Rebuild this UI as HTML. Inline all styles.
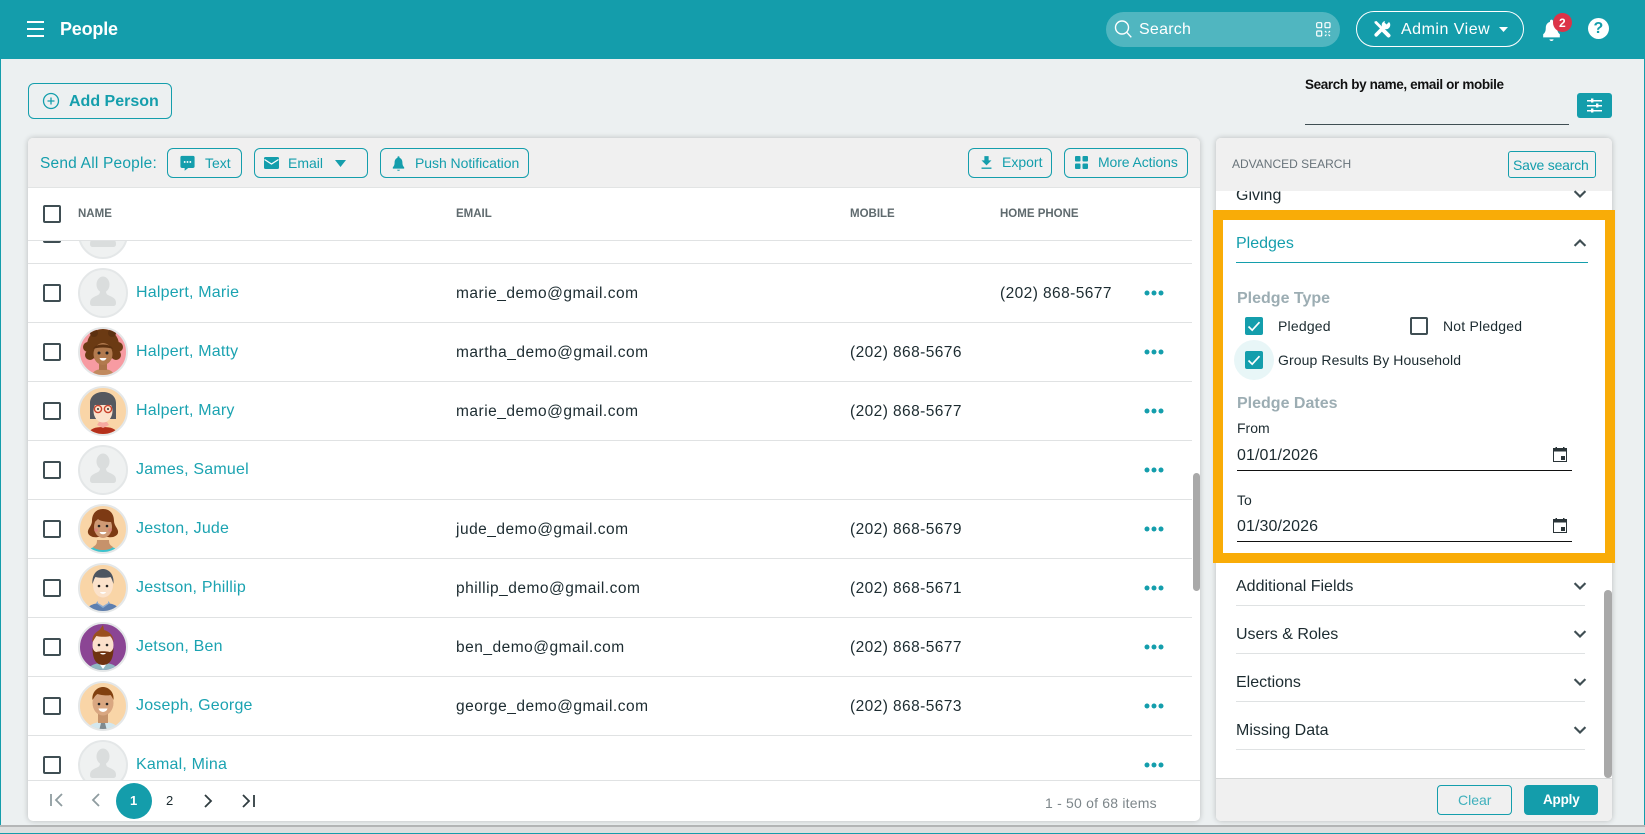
<!DOCTYPE html>
<html><head><meta charset="utf-8"><title>People</title>
<style>
html,body{margin:0;padding:0}
html{overflow:hidden;height:834px}
body{width:1645px;height:834px;overflow:hidden;position:relative;background:#ecf0f1;font-family:"Liberation Sans",Arial,sans-serif;color:#1c2b30}
div,svg{position:absolute}
.t{position:absolute;white-space:nowrap;height:0;line-height:0}
.b{position:absolute;box-sizing:border-box;border:1px solid #149eac;border-radius:6px}
.tl{color:#149eac}
.cb{position:absolute;left:43px;width:18px;height:18px;box-sizing:border-box;border:2px solid #3f4e53;border-radius:2px}
.ck{position:absolute;width:18px;height:18px;border-radius:2px;background:#149eac}
.ln{position:absolute;left:28px;width:1164px;height:1px;background:#e0e2e3}
.n{left:136px;font-size:16px;letter-spacing:.2px;color:#1ba3b1;margin-top:2px}
.e{left:456px;font-size:15.5px;letter-spacing:.5px;color:#1c2b30;margin-top:2px}
.m{left:850px;font-size:15.5px;letter-spacing:.42px;color:#1c2b30;margin-top:2px}
.h{left:1000px;font-size:15.5px;letter-spacing:.42px;color:#1c2b30;margin-top:2px}
.th{font-size:11.5px;font-weight:bold;color:#5f6a6e;top:214px}
.d{position:absolute;left:1144px;width:20px;height:6px}
.s{position:absolute;left:1236px;font-size:16px;color:#1c2b30;margin-top:2px}
.sl{position:absolute;left:1236px;width:349px;height:1px;background:#dfe2e3}
.lb{position:absolute;left:1237px;font-size:16px;font-weight:bold;color:#9cadb3}
.av{position:absolute;left:78px;width:50px;height:50px}
</style></head>
<body>
<svg width="0" height="0" style="position:absolute;left:0;top:0">
<defs>
<symbol id="ph" viewBox="0 0 50 50"><circle cx="25" cy="25" r="24" fill="#eff1f1" stroke="#e4e7e8" stroke-width="2"/><ellipse cx="25" cy="16.500" rx="6.500" ry="8" fill="#dadddd"/><path d="M12 35c0-5 4-6 8-8 2-1 2-3 2-5h6c0 2 0 4 2 5 4 2 8 3 8 8 0 2-1 3-3 3H15c-2 0-3-1-3-3z" fill="#dadddd"/></symbol>
<symbol id="dn" viewBox="0 0 24 24"><path d="M5.500 8.500L12 15l6.500-6.500" fill="none" stroke="#3f4e53" stroke-width="2.600"/></symbol>
<symbol id="cal" viewBox="0 0 14 15"><rect x=".5" y="1.500" width="13" height="13" fill="none" stroke="#2a3438"/><rect x="0" y="1" width="14" height="3.500" fill="#2a3438"/><rect x="2.500" y="0" width="1.500" height="2.500" fill="#2a3438"/><rect x="10" y="0" width="1.500" height="2.500" fill="#2a3438"/><rect x="8" y="9" width="4" height="4" fill="#2a3438"/></symbol>
<symbol id="dots" viewBox="0 0 20 6"><circle cx="3" cy="3" r="2.500" fill="#149eac"/><circle cx="10" cy="3" r="2.500" fill="#149eac"/><circle cx="17" cy="3" r="2.500" fill="#149eac"/></symbol>
<symbol id="tick" viewBox="0 0 18 18"><path d="M3.500 9.500l3.700 3.700 7.300-8" fill="none" stroke="#fff" stroke-width="1.700"/></symbol>
</defs>
</svg>

<!-- page frame -->
<div style="left:0;top:0;width:1px;height:834px;background:#149dab"></div>
<div style="left:1644px;top:0;width:1px;height:834px;background:#149dab"></div>
<div style="left:0;top:825px;width:1645px;height:2px;background:#b4b6b7"></div>
<div style="left:0;top:827px;width:1645px;height:6px;background:#dddfdf"></div>
<div style="left:0;top:833px;width:1645px;height:1px;background:#149dab"></div>

<!-- top bar -->
<div style="left:0;top:0;width:1645px;height:59px;background:#149dab"></div>
<div style="left:27px;top:21px;width:17px;height:2px;background:#fff"></div>
<div style="left:27px;top:28px;width:17px;height:2px;background:#fff"></div>
<div style="left:27px;top:35px;width:17px;height:2px;background:#fff"></div>
<div class="t" style="left:60px;top:29px;font-size:18px;font-weight:bold;color:#fff;letter-spacing:-.2px">People</div>

<div style="left:1106px;top:12px;width:234px;height:35px;border-radius:18px;background:#50b6c0"></div>
<svg style="left:1114px;top:19px" width="19" height="20" viewBox="0 0 19 20"><circle cx="8" cy="8.500" r="6.500" fill="none" stroke="#fff" stroke-width="1.400"/><path d="M12.800 13.300l4.500 5" stroke="#fff" stroke-width="1.400"/></svg>
<div class="t" style="left:1139px;top:29.500px;font-size:16px;color:#fff;letter-spacing:.25px">Search</div>
<svg style="left:1316px;top:22px" width="15" height="15" viewBox="0 0 15 15" fill="none" stroke="#fff" stroke-width="1.200"><rect x=".7" y=".7" width="5" height="5" rx="1"/><rect x="9" y=".7" width="5" height="5" rx="1"/><rect x=".7" y="9" width="5" height="5" rx="1"/><path d="M9 9l1.500 1.500M14 9l-1.500 1.500M9 14l1.500-1.500M14 14l-1.500-1.500"/></svg>

<div style="left:1356px;top:11px;width:168px;height:36px;box-sizing:border-box;border:1px solid #fff;border-radius:18px"></div>
<svg style="left:1373px;top:20px" width="18" height="18" viewBox="0 0 18 18">
<path d="M1.500 1.500l2-.5 6 6-2 2-6-6z" fill="#fff"/><path d="M10 10l5.500 5.500" stroke="#fff" stroke-width="4" stroke-linecap="round"/>
<path d="M3.200 14.800L11 7" stroke="#fff" stroke-width="3.600" stroke-linecap="round"/>
<circle cx="13" cy="5" r="4.300" fill="#fff"/><path d="M13.500 4.500L17.500 .5H12l-.5 2z" fill="#149dab"/>
</svg>
<div class="t" style="left:1401px;top:29.500px;font-size:16px;color:#fff;letter-spacing:.5px">Admin View</div>
<svg style="left:1499px;top:27px" width="9" height="5" viewBox="0 0 9 5"><path d="M0 0h9L4.500 5z" fill="#fff"/></svg>

<svg style="left:1539px;top:17px" width="25" height="25" viewBox="0 0 24 24"><path d="M12 23c1.100 0 2-.5 2-1.500h-4c0 1 .9 1.500 2 1.500zm8-6.500c-2-1.500-2.500-3.500-2.500-6 0-3.070-1.630-5.140-4-5.820V4c0-.83-.67-1.500-1.500-1.500s-1.500.67-1.500 1.500v.68C8.140 5.360 6.500 7.420 6.500 10.500c0 2.500-.5 4.500-2.500 6v3h16v-3z" fill="#fff"/></svg>
<div style="left:1553px;top:13px;width:19px;height:19px;border-radius:50%;background:#dc3348"></div>
<div class="t" style="left:1559px;top:23px;font-size:12px;font-weight:bold;color:#fff">2</div>
<div style="left:1587.500px;top:17.500px;width:21px;height:21px;border-radius:50%;background:#fff"></div>
<div class="t" style="left:1593.500px;top:28.500px;font-size:16px;font-weight:bold;color:#149dab">?</div>

<!-- add person -->
<div class="b" style="left:28px;top:83px;width:144px;height:36px"></div>
<svg style="left:42px;top:92px" width="18" height="18" viewBox="0 0 18 18" fill="none" stroke="#149eac" stroke-width="1.300"><circle cx="9" cy="9" r="7.500"/><path d="M9 5.500v7M5.500 9h7"/></svg>
<div class="t tl" style="left:69px;top:101.500px;font-size:16px;font-weight:bold">Add Person</div>

<!-- search by name -->
<div class="t" style="left:1305px;top:84.500px;font-size:13.500px;font-weight:bold;color:#111;letter-spacing:-.37px">Search by name, email or mobile</div>
<div style="left:1305px;top:124px;width:264px;height:1px;background:#3f4e53"></div>
<div style="left:1577px;top:93px;width:35px;height:25px;border-radius:3px;background:#149dab"></div>
<svg style="left:1587px;top:98px" width="15" height="15" viewBox="0 0 15 15" fill="#fff"><rect x="0" y="2" width="15" height="1.500"/><rect x="0" y="7" width="15" height="1.500"/><rect x="0" y="12" width="15" height="1.500"/><rect x="4" y=".5" width="2.400" height="4"/><rect x="9" y="5.500" width="2.400" height="4"/><rect x="4" y="10.500" width="2.400" height="4"/></svg>

<!-- left card -->
<div style="left:28px;top:138px;width:1172px;height:683px;background:#fff;border-radius:5px;box-shadow:0 0 6px rgba(0,0,0,.22);overflow:hidden">
  <div style="left:0;top:0;width:1172px;height:49px;background:#f0f0f0;border-bottom:1px solid #e2e4e4"></div>
</div>
<div class="t tl" style="left:40px;top:164px;font-size:15.500px;letter-spacing:.2px">Send All People:</div>

<div class="b" style="left:167px;top:148px;width:75px;height:30px"></div>
<svg style="left:179px;top:154px" width="17" height="18" viewBox="0 0 24 24"><path d="M20 2H4c-1.100 0-2 .9-2 2v13c0 1.100.9 2 2 2h4v4l5-4h7c1.100 0 2-.9 2-2V4c0-1.100-.9-2-2-2z" fill="#149eac"/><circle cx="8" cy="10.500" r="1.300" fill="#fff"/><circle cx="12" cy="10.500" r="1.300" fill="#fff"/><circle cx="16" cy="10.500" r="1.300" fill="#fff"/></svg>
<div class="t tl" style="left:205px;top:163px;font-size:14px">Text</div>

<div class="b" style="left:254px;top:148px;width:114px;height:30px"></div>
<svg style="left:264px;top:157px" width="15" height="12" viewBox="0 0 15 12"><rect width="15" height="12" rx="1.500" fill="#149eac"/><path d="M.5 2.500l7 4.500 7-4.500" fill="none" stroke="#fff" stroke-width="1.200"/></svg>
<div class="t tl" style="left:288px;top:163px;font-size:14px">Email</div>
<svg style="left:335px;top:160px" width="11" height="7" viewBox="0 0 11 7"><path d="M0 0h11L5.500 7z" fill="#149eac"/></svg>

<div class="b" style="left:380px;top:148px;width:149px;height:30px"></div>
<svg style="left:390px;top:154px" width="17" height="18" viewBox="0 0 24 24"><path d="M12 23c1.100 0 2-.5 2-1.500h-4c0 1 .9 1.500 2 1.500zm8-5c-2-1.500-2.500-4-2.500-7 0-3.070-1.630-5.640-4-6.320V4c0-.83-.67-1.500-1.500-1.500s-1.500.67-1.500 1.500v.68C8.140 5.360 6.500 7.920 6.500 11c0 3-.5 5.500-2.500 7v2h16v-2z" fill="#149eac"/></svg>
<div class="t tl" style="left:415px;top:163px;font-size:14px;letter-spacing:-.05px">Push Notification</div>

<div class="b" style="left:968px;top:148px;width:84px;height:30px"></div>
<svg style="left:978px;top:154px" width="17" height="17" viewBox="0 0 24 24"><path d="M19 9h-4V3H9v6H5l7 7 7-7zM5 19v2h14v-2H5z" fill="#149eac"/></svg>
<div class="t tl" style="left:1002px;top:162px;font-size:14px">Export</div>

<div class="b" style="left:1064px;top:148px;width:124px;height:30px"></div>
<svg style="left:1075px;top:156px" width="13" height="13" viewBox="0 0 13 13" fill="#149eac"><rect width="5.500" height="5.500" rx="1"/><rect x="7.500" width="5.500" height="5.500" rx="1"/><rect y="7.500" width="5.500" height="5.500" rx="1"/><rect x="7.500" y="7.500" width="5.500" height="5.500" rx="1"/></svg>
<div class="t tl" style="left:1098px;top:162px;font-size:14px;letter-spacing:-.1px">More Actions</div>

<!-- table header -->
<div class="cb" style="top:205px"></div>
<div class="t th" style="left:78px">NAME</div>
<div class="t th" style="left:456px">EMAIL</div>
<div class="t th" style="left:850px">MOBILE</div>
<div class="t th" style="left:1000px">HOME PHONE</div>
<div class="ln" style="top:240px"></div>

<!-- table rows (clipped) -->
<div style="left:0;top:241px;width:1200px;height:539px;overflow:hidden">
  <div style="left:0;top:-241px;width:1200px;height:780px">
    <div class="cb" style="top:225px"></div>
    <svg class="av" style="top:209px"><use href="#ph"/></svg>
    <div class="ln" style="top:263px"></div>

    <div class="cb" style="top:284px"></div>
    <svg class="av" style="top:268px"><use href="#ph"/></svg>
    <div class="t n" style="top:291px">Halpert, Marie</div>
    <div class="t e" style="top:292px">marie_demo@gmail.com</div>
    <div class="t h" style="top:292px">(202) 868-5677</div>
    <svg class="d" style="top:290px"><use href="#dots"/></svg>
    <div class="ln" style="top:322px"></div>

    <div class="cb" style="top:343px"></div>
    <svg class="av" style="top:327px" viewBox="0 0 50 50"><circle cx="25" cy="25" r="24" fill="#f79ba2" stroke="#e4e7e8" stroke-width="2"/><clipPath id="c1"><circle cx="25" cy="25" r="23"/></clipPath><g clip-path="url(#c1)"><path d="M14 50c0-6 5-8 11-8s11 2 11 8z" fill="#c08a5f"/><circle cx="25" cy="18" r="16" fill="#6b3a13"/><circle cx="10" cy="20" r="5" fill="#6b3a13"/><circle cx="40" cy="20" r="5" fill="#6b3a13"/><circle cx="12" cy="28" r="5" fill="#6b3a13"/><circle cx="38" cy="28" r="5" fill="#6b3a13"/><circle cx="16" cy="6" r="4" fill="#5c3110"/><circle cx="34" cy="6" r="4" fill="#5c3110"/><path d="M21 36h8v7h-8z" fill="#ab7349"/><ellipse cx="25" cy="27" rx="9.500" ry="11" fill="#b27a4e"/><path d="M15 22c2-6 18-6 20 0-5-2-15-2-20 0z" fill="#5c3110"/><circle cx="21" cy="26" r="1.500" fill="#222"/><circle cx="29" cy="26" r="1.500" fill="#222"/><path d="M21.500 31h7c-1 3.500-6 3.500-7 0z" fill="#fff"/></g></svg>
    <div class="t n" style="top:350px">Halpert, Matty</div>
    <div class="t e" style="top:351px">martha_demo@gmail.com</div>
    <div class="t m" style="top:351px">(202) 868-5676</div>
    <svg class="d" style="top:349px"><use href="#dots"/></svg>
    <div class="ln" style="top:381px"></div>

    <div class="cb" style="top:402px"></div>
    <svg class="av" style="top:386px" viewBox="0 0 50 50"><circle cx="25" cy="25" r="24" fill="#f9d5a7" stroke="#e4e7e8" stroke-width="2"/><clipPath id="c2"><circle cx="25" cy="25" r="23"/></clipPath><g clip-path="url(#c2)"><path d="M10 50c1-7 6-9 15-9s14 2 15 9z" fill="#b5301b"/><path d="M19 39l6 3 6-3-2-3h-8z" fill="#f6a9a0"/><path d="M12 33V17c0-7 6-11 13-11s13 4 13 11v16h-6V20H18v13z" fill="#55585f"/><ellipse cx="25" cy="25" rx="9.500" ry="11.500" fill="#fbe2cb"/><path d="M15 19c0-9 20-9 20 0z" fill="#55585f"/><circle cx="20" cy="23" r="3.600" fill="none" stroke="#c8412c" stroke-width="1.400"/><circle cx="30" cy="23" r="3.600" fill="none" stroke="#c8412c" stroke-width="1.400"/><circle cx="20" cy="23" r="1" fill="#333"/><circle cx="30" cy="23" r="1" fill="#333"/></g></svg>
    <div class="t n" style="top:409px">Halpert, Mary</div>
    <div class="t e" style="top:410px">marie_demo@gmail.com</div>
    <div class="t m" style="top:410px">(202) 868-5677</div>
    <svg class="d" style="top:408px"><use href="#dots"/></svg>
    <div class="ln" style="top:440px"></div>

    <div class="cb" style="top:461px"></div>
    <svg class="av" style="top:445px"><use href="#ph"/></svg>
    <div class="t n" style="top:468px">James, Samuel</div>
    <svg class="d" style="top:467px"><use href="#dots"/></svg>
    <div class="ln" style="top:499px"></div>

    <div class="cb" style="top:520px"></div>
    <svg class="av" style="top:504px" viewBox="0 0 50 50"><circle cx="25" cy="25" r="24" fill="#f9d5a7" stroke="#e4e7e8" stroke-width="2"/><clipPath id="c3"><circle cx="25" cy="25" r="23"/></clipPath><g clip-path="url(#c3)"><path d="M9 50c1-6 7-8 16-8s15 2 16 8z" fill="#3cc3cf"/><path d="M15 43c3-2 4-3 4-7h12c0 4 1 5 4 7-4 4-16 4-20 0z" fill="#c6926b"/><path d="M25 5c-8 0-11 6-11 12 0 5-5 8-4 12 1 3 5 5 10 4h10c5 1 9-1 10-4 1-4-4-7-4-12 0-6-3-12-11-12z" fill="#7d3a14"/><ellipse cx="25" cy="23" rx="9" ry="11" fill="#cf9a75"/><path d="M16 18c2-6 8-8 12-7 4 1 6 4 6 7-6 0-12-1-14-3-1 1-2 2-4 3z" fill="#7d3a14"/><circle cx="21" cy="22" r="1.300" fill="#222"/><circle cx="29" cy="22" r="1.300" fill="#222"/><circle cx="18" cy="26" r="1.800" fill="#d8847a"/><circle cx="32" cy="26" r="1.800" fill="#d8847a"/><path d="M21.500 28h7c-1 3-6 3-7 0z" fill="#fff"/></g></svg>
    <div class="t n" style="top:527px">Jeston, Jude</div>
    <div class="t e" style="top:528px">jude_demo@gmail.com</div>
    <div class="t m" style="top:528px">(202) 868-5679</div>
    <svg class="d" style="top:526px"><use href="#dots"/></svg>
    <div class="ln" style="top:558px"></div>

    <div class="cb" style="top:579px"></div>
    <svg class="av" style="top:563px" viewBox="0 0 50 50"><circle cx="25" cy="25" r="24" fill="#f9d5a7" stroke="#e4e7e8" stroke-width="2"/><clipPath id="c4"><circle cx="25" cy="25" r="23"/></clipPath><g clip-path="url(#c4)"><path d="M8 50c1-7 6-10 17-10s16 3 17 10z" fill="#5d7fb0"/><path d="M18 40l7 5 7-5-2-2H20z" fill="#8eacd0"/><path d="M20 33h10v7l-5 3-5-3z" fill="#f7d3ad"/><ellipse cx="25" cy="22" rx="10" ry="12.500" fill="#fbe2cb"/><path d="M14.500 21c-1-10 5-15 10.500-15s11.500 5 10.500 15c-1-3-2-6-3-7-4 1-11 1-15 0-1 1-2 4-3 7z" fill="#4d5560"/><circle cx="21" cy="23" r="1.300" fill="#222"/><circle cx="29" cy="23" r="1.300" fill="#222"/><path d="M22 29h6c-1 2.500-5 2.500-6 0z" fill="#fff"/></g></svg>
    <div class="t n" style="top:586px">Jestson, Phillip</div>
    <div class="t e" style="top:587px">phillip_demo@gmail.com</div>
    <div class="t m" style="top:587px">(202) 868-5671</div>
    <svg class="d" style="top:585px"><use href="#dots"/></svg>
    <div class="ln" style="top:617px"></div>

    <div class="cb" style="top:638px"></div>
    <svg class="av" style="top:622px" viewBox="0 0 50 50"><circle cx="25" cy="25" r="24" fill="#8b4594" stroke="#e4e7e8" stroke-width="2"/><clipPath id="c5"><circle cx="25" cy="25" r="23"/></clipPath><g clip-path="url(#c5)"><path d="M9 50c1-6 7-9 16-9s15 3 16 9z" fill="#8fb7c2"/><path d="M20 40h10l-5 7z" fill="#fff"/><ellipse cx="25" cy="23" rx="10.500" ry="12" fill="#fbe0cb"/><path d="M14.500 20c-1-7 4-10 7-12l3.500-5 1 5c4 1 10 5 9.500 12-1-3-2-5-3-6-4 1-10 1-14 0-1 1-2 3-4 6z" fill="#9a4f1e"/><path d="M14.500 26c0 10 3 17 10.500 17s10.500-7 10.500-17c-1 2-2 4-4 4-3-1-10-1-13 0-2 0-3-2-4-4z" fill="#6f3312"/><path d="M22 31h6c-1 2-5 2-6 0z" fill="#fff"/><circle cx="21" cy="23" r="1.300" fill="#222"/><circle cx="29" cy="23" r="1.300" fill="#222"/></g></svg>
    <div class="t n" style="top:645px">Jetson, Ben</div>
    <div class="t e" style="top:646px">ben_demo@gmail.com</div>
    <div class="t m" style="top:646px">(202) 868-5677</div>
    <svg class="d" style="top:644px"><use href="#dots"/></svg>
    <div class="ln" style="top:676px"></div>

    <div class="cb" style="top:697px"></div>
    <svg class="av" style="top:681px" viewBox="0 0 50 50"><circle cx="25" cy="25" r="24" fill="#f9d5a7" stroke="#e4e7e8" stroke-width="2"/><clipPath id="c6"><circle cx="25" cy="25" r="23"/></clipPath><g clip-path="url(#c6)"><path d="M9 50c1-6 7-9 16-9s15 3 16 9z" fill="#d3e7ee"/><path d="M23 42h4l2 8h-8z" fill="#7e8a90"/><path d="M20 33h10v9H20z" fill="#c6946c"/><ellipse cx="25" cy="22" rx="10.500" ry="12.500" fill="#d9a781"/><path d="M14.500 19c-1-8 5-13 10.500-13s11.500 5 10.500 13c-1-2-2-4-3-5-4 1-10 0-13-1-2 1-3 3-5 6z" fill="#82400f"/><circle cx="21" cy="23" r="1.300" fill="#222"/><circle cx="29" cy="23" r="1.300" fill="#222"/><path d="M20.500 27.500h9c-1 4.500-8 4.500-9 0z" fill="#fff"/></g></svg>
    <div class="t n" style="top:704px">Joseph, George</div>
    <div class="t e" style="top:705px">george_demo@gmail.com</div>
    <div class="t m" style="top:705px">(202) 868-5673</div>
    <svg class="d" style="top:703px"><use href="#dots"/></svg>
    <div class="ln" style="top:735px"></div>

    <div class="cb" style="top:756px"></div>
    <svg class="av" style="top:740px"><use href="#ph"/></svg>
    <div class="t n" style="top:763px">Kamal, Mina</div>
    <svg class="d" style="top:762px"><use href="#dots"/></svg>
  </div>
</div>
<div style="left:1193px;top:473px;width:7px;height:118px;border-radius:4px;background:#a9a9a9"></div>

<!-- pagination -->
<div class="ln" style="top:780px;width:1172px"></div>
<svg style="left:49px;top:792px" width="15" height="16" viewBox="0 0 15 16" fill="none" stroke="#8f9ca0" stroke-width="1.800"><path d="M2 2v12M13 2L7 8l6 6"/></svg>
<svg style="left:90px;top:792px" width="11" height="16" viewBox="0 0 11 16" fill="none" stroke="#8f9ca0" stroke-width="1.800"><path d="M9 2L3 8l6 6"/></svg>
<div style="left:116px;top:783px;width:36px;height:36px;border-radius:50%;background:#149dab"></div>
<div class="t" style="left:130px;top:801px;font-size:13px;font-weight:bold;color:#fff">1</div>
<div class="t" style="left:166px;top:801px;font-size:13px;color:#1c2b30">2</div>
<svg style="left:203px;top:793px" width="11" height="16" viewBox="0 0 11 16" fill="none" stroke="#2f3c40" stroke-width="1.800"><path d="M2 2l6 6-6 6"/></svg>
<svg style="left:241px;top:793px" width="15" height="16" viewBox="0 0 15 16" fill="none" stroke="#2f3c40" stroke-width="1.800"><path d="M2 2l6 6-6 6M13 2v12"/></svg>
<div class="t" style="left:1045px;top:802.500px;font-size:14px;color:#7d868a;letter-spacing:.2px">1 - 50 of 68 items</div>

<!-- right card -->
<div style="left:1216px;top:138px;width:396px;height:683px;background:#fff;border-radius:5px;box-shadow:0 0 6px rgba(0,0,0,.22);overflow:hidden">
  <div style="left:0;top:0;width:396px;height:53px;background:#f0f0f0"></div>
  <div style="left:0;top:640px;width:396px;height:43px;background:#f0f0f0;border-top:1px solid #d6d8d8"></div>
</div>
<div class="t" style="left:1232px;top:164px;font-size:12px;color:#68737a">ADVANCED SEARCH</div>
<div class="b" style="left:1508px;top:151px;width:88px;height:27px;border-radius:3px"></div>
<div class="t tl" style="left:1513px;top:165px;font-size:14px;letter-spacing:-.2px">Save search</div>

<div style="left:1216px;top:191px;width:396px;height:19px;overflow:hidden">
  <div class="t" style="left:20px;top:4.500px;font-size:16px;color:#1c2b30">Giving</div>
</div>
<svg style="left:1570px;top:184px" width="20" height="20"><use href="#dn"/></svg>

<!-- orange highlighted section -->
<div style="left:1213px;top:210px;width:402px;height:353px;box-sizing:border-box;border:10px solid #f9ac07;background:#fff"></div>
<div class="t tl" style="left:1236px;top:244px;font-size:16px">Pledges</div>
<svg style="left:1570px;top:233px;transform:rotate(180deg)" width="20" height="20"><use href="#dn"/></svg>
<div style="left:1236px;top:261.500px;width:352px;height:1px;background:#149eac"></div>

<div class="t lb" style="top:299px">Pledge Type</div>
<div class="ck" style="left:1245px;top:317px"><svg width="18" height="18" style="left:0;top:0"><use href="#tick"/></svg></div>
<div class="t" style="left:1278px;top:326px;font-size:14px;letter-spacing:.2px;color:#1c2b30">Pledged</div>
<div class="cb" style="left:1410px;top:317px"></div>
<div class="t" style="left:1443px;top:326px;font-size:14px;letter-spacing:.2px;color:#1c2b30">Not Pledged</div>
<div style="left:1234px;top:340px;width:40px;height:40px;border-radius:50%;background:#e8f6f7"></div>
<div class="ck" style="left:1245px;top:351px"><svg width="18" height="18" style="left:0;top:0"><use href="#tick"/></svg></div>
<div class="t" style="left:1278px;top:360px;font-size:14px;letter-spacing:.1px;color:#1c2b30">Group Results By Household</div>

<div class="t lb" style="top:403.500px">Pledge Dates</div>
<div class="t" style="left:1237px;top:428px;font-size:14px;color:#1c2b30">From</div>
<div class="t" style="left:1237px;top:455.500px;font-size:16px;color:#1c2b30;letter-spacing:.1px">01/01/2026</div>
<svg style="left:1553px;top:447px" width="14" height="15"><use href="#cal"/></svg>
<div style="left:1237px;top:470px;width:335px;height:1px;background:#111"></div>
<div class="t" style="left:1237px;top:500px;font-size:14px;color:#1c2b30">To</div>
<div class="t" style="left:1237px;top:526.500px;font-size:16px;color:#1c2b30;letter-spacing:.1px">01/30/2026</div>
<svg style="left:1553px;top:518px" width="14" height="15"><use href="#cal"/></svg>
<div style="left:1237px;top:541px;width:335px;height:1px;background:#111"></div>

<div class="t s" style="top:585px">Additional Fields</div>
<svg style="left:1570px;top:576px" width="20" height="20"><use href="#dn"/></svg>
<div class="sl" style="top:605px"></div>
<div class="t s" style="top:633px">Users &amp; Roles</div>
<svg style="left:1570px;top:624px" width="20" height="20"><use href="#dn"/></svg>
<div class="sl" style="top:653px"></div>
<div class="t s" style="top:681px">Elections</div>
<svg style="left:1570px;top:672px" width="20" height="20"><use href="#dn"/></svg>
<div class="sl" style="top:701px"></div>
<div class="t s" style="top:729px">Missing Data</div>
<svg style="left:1570px;top:720px" width="20" height="20"><use href="#dn"/></svg>
<div class="sl" style="top:749px"></div>

<div style="left:1604px;top:590px;width:8px;height:188px;border-radius:4px;background:#a9a9a9"></div>

<div class="b" style="left:1437px;top:785px;width:75px;height:30px;border-radius:4px"></div>
<div class="t" style="left:1458px;top:800px;font-size:14px;color:#3fb0bc">Clear</div>
<div style="left:1524px;top:785px;width:74px;height:30px;border-radius:4px;background:#149dab"></div>
<div class="t" style="left:1543px;top:800px;font-size:13.500px;font-weight:bold;color:#fff;letter-spacing:-.2px">Apply</div>
</body></html>
